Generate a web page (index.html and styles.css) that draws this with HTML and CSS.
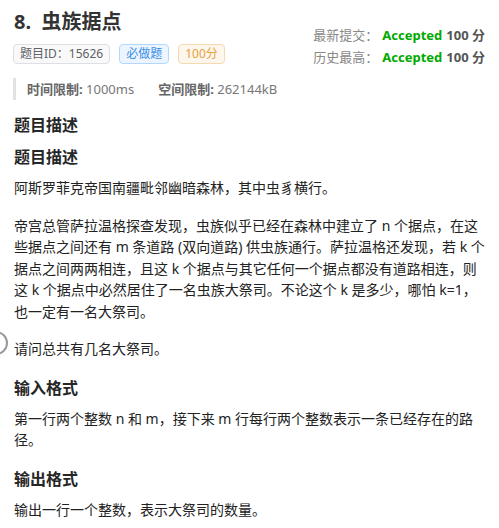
FILE: index.html
```html
<!DOCTYPE html>
<html>
<head>
	<meta charset="utf-8">
	<title>8. 虫族据点</title>
	<link rel="stylesheet" href="styles.css">
</head>
<body>
<div id="container">

	<div class="header">
		<div class="header-left">
			<h1>8.&nbsp; 虫族据点</h1>
			<div class="tags">
				<span class="tag">题目ID：15626</span>
				<span class="tag tag-blue">必做题</span>
				<span class="tag tag-orange">100分</span>
			</div>
			<div class="limits">
				<span><b>时间限制:</b> 1000ms</span>
				<span><b>空间限制:</b> 262144kB</span>
			</div>
		</div>

		<div class="header-right">
			<div class="sub-row"><span class="sub-label">最新提交：</span><span class="ac">Accepted</span><span class="score">100 分</span></div>
			<div class="sub-row"><span class="sub-label">历史最高：</span><span class="ac">Accepted</span><span class="score">100 分</span></div>
		</div>
	</div>

	<h3>题目描述</h3>
	<h3>题目描述</h3>
	<p>阿斯罗菲克帝国南疆毗邻幽暗森林，其中虫豸横行。</p>
	<p>帝宫总管萨拉温格探查发现，虫族似乎已经在森林中建立了 n 个据点，在这些据点之间还有 m 条道路 (双向道路) 供虫族通行。萨拉温格还发现，若 k 个据点之间两两相连，且这 k 个据点与其它任何一个据点都没有道路相连，则这 k 个据点中必然居住了一名虫族大祭司。不论这个 k 是多少，哪怕 k=1，也一定有一名大祭司。</p>
	<p class="with-toggle">请问总共有几名大祭司。<span class="toggle"></span></p>

	<h3>输入格式</h3>
	<p>第一行两个整数 n 和 m，接下来 m 行每行两个整数表示一条已经存在的路径。</p>

	<h3>输出格式</h3>
	<p>输出一行一个整数，表示大祭司的数量。</p>

</div>
</body>
</html>
```

FILE: styles.css
```css
body {
	margin: 0;
	font-family: "Noto Sans", "Noto Sans CJK SC", sans-serif;
	color: #262626;
	background: #fff;
}

#container {
	padding: 8px 14px 0 14px;
}

.header {
	display: flex;
	justify-content: space-between;
}

h1 {
	margin: 0;
	font-size: 20px;
	line-height: 28px;
	font-weight: bold;
	color: #333;
}

.tags {
	display: flex;
	gap: 9px;
	margin-top: 8px;
	margin-left: -1px;
}
.tag {
	display: inline-block;
	height: 18px;
	line-height: 18px;
	padding: 0 6px;
	font-size: 12px;
	color: #606266;
	background: #f9f9fa;
	border: 1px solid #dcdfe6;
	border-radius: 4px;
}
.tag-blue {
	color: #3a8ee6;
	background: #ecf5ff;
	border-color: #b3d8ff;
}
.tag-orange {
	color: #e6a23c;
	background: #fdf6ec;
	border-color: #f5dab1;
}

.limits {
	display: flex;
	gap: 24px;
	margin-top: 14px;
	margin-left: -1px;
	padding-left: 11px;
	border-left: 3px solid #e2e2e2;
	height: 22px;
	line-height: 22px;
	font-size: 13px;
	color: #777;
}
.limits b {
	color: #666;
}

.header-right {
	margin-top: 16px;
	padding-right: 0;
}
.sub-row {
	line-height: 22px;
	font-size: 13px;
	text-align: right;
}
.sub-label {
	color: #888;
	margin-right: 4px;
}
.ac {
	color: #00aa00;
	font-weight: bold;
}
.score {
	color: #555;
	font-weight: bold;
	margin-left: 4px;
}

h3 {
	margin: 13px 0 8px 0;
	font-size: 16px;
	line-height: 24px;
	font-weight: bold;
}
h3 + h3 {
	margin-top: 0;
}

p {
	margin: 0 0 16px 0;
	font-size: 14px;
	line-height: 21.5px;
	color: #222;
}
p + h3 {
	margin-top: 0;
}

.with-toggle {
	position: relative;
}
.toggle {
	position: absolute;
	left: -30px;
	top: -7px;
	width: 20px;
	height: 20px;
	border: 2px solid #999;
	border-radius: 50%;
	background: #fff;
}
```
